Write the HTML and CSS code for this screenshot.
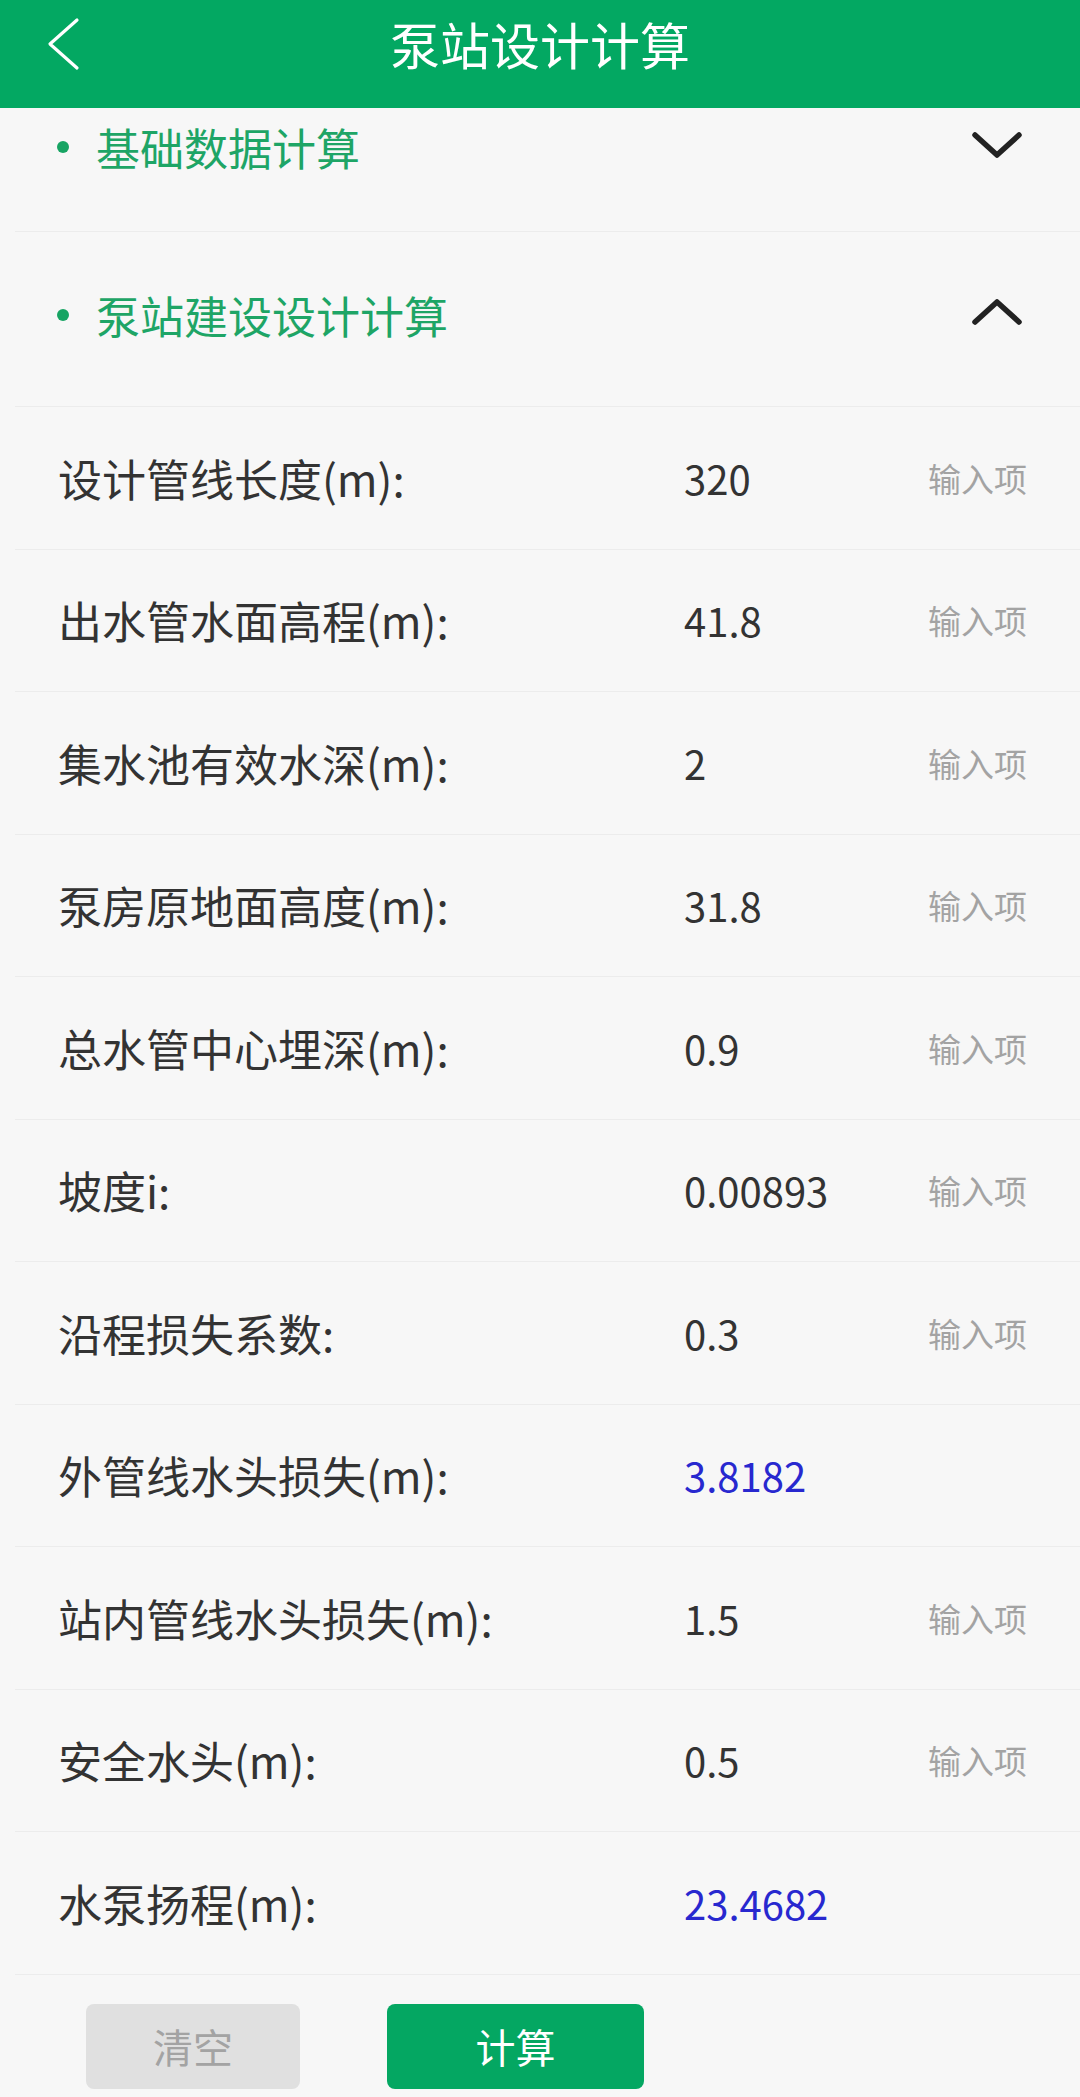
FILE: index.html
```html
<!DOCTYPE html>
<html lang="zh-CN">
<head>
    <meta charset="UTF-8">
    <meta name="viewport" content="width=device-width, initial-scale=1.0">
    <title>泵站设计计算</title>
    <link rel="stylesheet" href="styles.css">
</head>
<body>
    <div class="app">
        <div class="topbar">
            <svg class="back" width="40" height="56" viewBox="0 0 40 56">
                <polyline points="31,4 4,28 31,52" fill="none" stroke="#fff" stroke-width="3.2" stroke-linecap="round" stroke-linejoin="round"/>
            </svg>
            <h1>泵站设计计算</h1>
        </div>

        <div class="section section-first">
            <span class="dot"></span>
            <span class="section-title">基础数据计算</span>
            <svg class="arrow" width="52" height="28" viewBox="0 0 52 28">
                <polyline points="4,4 26,24 48,4" fill="none" stroke="#222" stroke-width="5.5" stroke-linecap="round" stroke-linejoin="round"/>
            </svg>
        </div>

        <div class="section section-open">
            <span class="dot"></span>
            <span class="section-title">泵站建设设计计算</span>
            <svg class="arrow" width="52" height="28" viewBox="0 0 52 28">
                <polyline points="4,24 26,4 48,24" fill="none" stroke="#222" stroke-width="5.5" stroke-linecap="round" stroke-linejoin="round"/>
            </svg>
        </div>

        <div class="rows">
            <div class="row">
                <span class="label">设计管线长度(m):</span>
                <span class="value">320</span>
                <span class="hint">输入项</span>
            </div>
            <div class="row">
                <span class="label">出水管水面高程(m):</span>
                <span class="value">41.8</span>
                <span class="hint">输入项</span>
            </div>
            <div class="row">
                <span class="label">集水池有效水深(m):</span>
                <span class="value">2</span>
                <span class="hint">输入项</span>
            </div>
            <div class="row">
                <span class="label">泵房原地面高度(m):</span>
                <span class="value">31.8</span>
                <span class="hint">输入项</span>
            </div>
            <div class="row">
                <span class="label">总水管中心埋深(m):</span>
                <span class="value">0.9</span>
                <span class="hint">输入项</span>
            </div>
            <div class="row">
                <span class="label">坡度i:</span>
                <span class="value">0.00893</span>
                <span class="hint">输入项</span>
            </div>
            <div class="row">
                <span class="label">沿程损失系数:</span>
                <span class="value">0.3</span>
                <span class="hint">输入项</span>
            </div>
            <div class="row">
                <span class="label">外管线水头损失(m):</span>
                <span class="value result">3.8182</span>
                <span class="hint"></span>
            </div>
            <div class="row">
                <span class="label">站内管线水头损失(m):</span>
                <span class="value">1.5</span>
                <span class="hint">输入项</span>
            </div>
            <div class="row">
                <span class="label">安全水头(m):</span>
                <span class="value">0.5</span>
                <span class="hint">输入项</span>
            </div>
            <div class="row">
                <span class="label">水泵扬程(m):</span>
                <span class="value result">23.4682</span>
                <span class="hint"></span>
            </div>
        </div>

        <div class="actions">
            <button class="btn btn-clear">清空</button>
            <button class="btn btn-calc">计算</button>
        </div>
    </div>
</body>
</html>
```

FILE: styles.css
```css
* {
    margin: 0;
    padding: 0;
    box-sizing: border-box;
}

body {
    font-family: "Noto Sans CJK SC", "Noto Sans", sans-serif;
    background-color: #f7f7f7;
    color: #333;
}

.app {
    width: 1080px;
    height: 2097px;
    overflow: hidden;
}

/* top bar */
.topbar {
    position: relative;
    height: 108px;
    background-color: #03a862;
    display: flex;
    align-items: center;
    justify-content: center;
}

.topbar h1 {
    font-size: 50px;
    font-weight: 400;
    color: #fff;
    line-height: 1;
    margin-top: -22px;
}

.topbar .back {
    position: absolute;
    left: 46px;
    top: 16px;
}

/* collapsible section headers */
.section {
    display: flex;
    align-items: center;
    padding: 0 57px 0 42px;
    margin-left: 15px;
    border-bottom: 1px solid #ececec;
}

.section-first {
    height: 124px;
    align-items: flex-start;
    padding-top: 1px;
}

.section-first .arrow {
    margin-top: 22px;
}

.section-open {
    height: 175px;
    padding-bottom: 8px;
}

.section-open .arrow {
    margin-top: -6px;
}

.dot {
    width: 12px;
    height: 12px;
    border-radius: 50%;
    background-color: #17a463;
    margin-right: 27px;
    flex-shrink: 0;
}

.section-first .dot {
    margin-top: 32px;
}

.section-title {
    font-size: 44px;
    font-weight: 400;
    color: #1ea566;
    line-height: 76px;
    flex: 1;
}

/* form rows */
.row {
    height: 142.5px;
    display: grid;
    grid-template-columns: 626px 1fr auto;
    align-items: center;
    padding-left: 43px;
    padding-right: 53px;
    margin-left: 15px;
    border-bottom: 1px solid #ececec;
}

.label {
    font-size: 44px;
    color: #333;
    white-space: nowrap;
}

.value {
    font-size: 40px;
    color: #333;
}

.value.result {
    color: #2828cf;
}

.hint {
    font-size: 33px;
    color: #a3a3a3;
}

/* bottom buttons */
.actions {
    display: flex;
    gap: 87px;
    padding: 29px 0 0 86px;
}

.btn {
    height: 85px;
    border: none;
    border-radius: 8px;
    font-family: inherit;
    font-size: 40px;
}

.btn-clear {
    width: 214px;
    background-color: #e0e0e0;
    color: #a3a3a3;
}

.btn-calc {
    width: 257px;
    background-color: #04a762;
    color: #fff;
}
```
